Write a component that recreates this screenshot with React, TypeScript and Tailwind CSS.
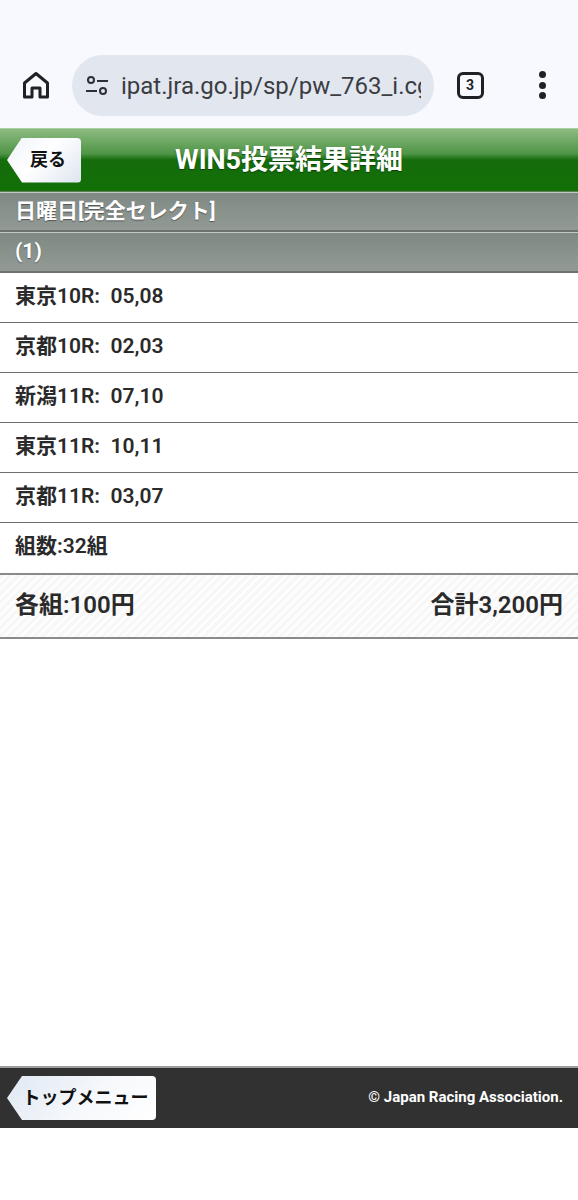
const FONT = "font-['Roboto','Noto_Sans_CJK_JP',sans-serif]";

function HomeIcon() {
  return (
    <svg width="28" height="28" viewBox="0 0 28 28" fill="none" stroke="#1f2125" strokeWidth="3" strokeLinejoin="round">
      <path d="M2.5 12 14 2.5 25.5 12v14H18v-9h-8v9H2.5z" />
    </svg>
  );
}

function TuneIcon() {
  return (
    <svg width="24" height="22" viewBox="0 0 24 22" fill="none" stroke="#2c2f33" strokeWidth="2">
      <circle cx="6" cy="5" r="3" />
      <path d="M12 6h11" />
      <path d="M1 16h11" />
      <circle cx="18" cy="16" r="3" />
    </svg>
  );
}

function Row({ children }: { children: React.ReactNode }) {
  return (
    <div className="h-[50px] flex items-center pl-[15px] pb-[2px] border-b border-[#6f6f6f] text-[21px] font-semibold text-[#2a2a2a] bg-white">
      {children}
    </div>
  );
}

function BackButton({ label, className }: { label: string; className: string }) {
  return (
    <div
      className={`flex items-center justify-center rounded-r-[4px] [clip-path:polygon(15px_0,100%_0,100%_100%,15px_100%,0_50%)] font-bold text-[#111] ${className}`}
    >
      {label}
    </div>
  );
}

function SubHeader({ h, children }: { h: string; children: React.ReactNode }) {
  return (
    <div className={`${h} flex items-center pl-[15px] text-[21px] font-bold text-white border-t border-[#c3cac5] border-b-2 border-b-[#6c736e] bg-[linear-gradient(#7f8984,#929a95)] [text-shadow:0_1px_1px_#555]`}>
      {children}
    </div>
  );
}

export default function App() {
  return (
    <div className={`${FONT} w-[578px] h-[1200px] bg-white flex flex-col`}>
      <div className="h-[128px] bg-[#f8f9ff] pt-[55px] pl-[7px] flex items-start">
        <div className="w-[58px] h-[60px] flex items-center justify-center">
          <HomeIcon />
        </div>
        <div className="ml-[7px] w-[362px] h-[61px] rounded-full bg-[#e2e6ef] flex items-center pl-[13px] pr-[12px] overflow-hidden">
          <TuneIcon />
          <div className="ml-[12px] w-[300px] overflow-hidden whitespace-nowrap text-[24px] text-[#3a3d42] font-['Roboto',sans-serif]">
            ipat.jra.go.jp/sp/pw_763_i.cgi
          </div>
        </div>
        <div className="ml-[22px] h-[60px] w-[28px] flex items-center justify-center">
          <div className="w-[27px] h-[27px] rounded-[6px] border-[3px] border-[#1f2125] flex items-center justify-center text-[14px] font-bold text-[#1f2125]">
            3
          </div>
        </div>
        <div className="ml-[55px] h-[60px] flex flex-col items-center justify-center gap-[3.5px]">
          <span className="w-[7px] h-[7px] rounded-full bg-[#1f2125]" />
          <span className="w-[7px] h-[7px] rounded-full bg-[#1f2125]" />
          <span className="w-[7px] h-[7px] rounded-full bg-[#1f2125]" />
        </div>
      </div>

      <div className="h-[64px] flex items-center border-t border-[#a9cfa2] bg-[linear-gradient(#8dbc82_0%,#4f9446_40%,#156c0c_50%,#127006_100%)] border-b border-b-[#5d7f58]">
        <div className="ml-[7px] h-[45px] w-[74px] rounded-[4px]">
          <BackButton
            label="戻る"
            className="w-full h-full pl-[8px] pb-[2px] text-[18px] bg-[linear-gradient(135deg,#eef3f9,#ffffff_45%,#dde5f0)]"
          />
        </div>
        <div className="ml-[94px] text-[27px] font-bold text-white leading-none [text-shadow:0_1px_1px_#0b4006]">
          WIN5投票結果詳細
        </div>
      </div>

      <SubHeader h="h-10">日曜日[完全セレクト]</SubHeader>
      <SubHeader h="h-[41px]">(1)</SubHeader>

      <Row>東京10R:&nbsp;&nbsp;05,08</Row>
      <Row>京都10R:&nbsp;&nbsp;02,03</Row>
      <Row>新潟11R:&nbsp;&nbsp;07,10</Row>
      <Row>東京11R:&nbsp;&nbsp;10,11</Row>
      <Row>京都11R:&nbsp;&nbsp;03,07</Row>
      <div className="h-[50px] flex items-center pl-[15px] pb-[2px] text-[21px] font-semibold text-[#2a2a2a] bg-white">
        組数:32組
      </div>

      <div className="h-[66px] flex items-center justify-between px-[15px] pb-[2px] border-t-2 border-b-2 border-[#8a8a8a] text-[24px] font-semibold text-[#2a2a2a] bg-[repeating-linear-gradient(135deg,#f7f7f7_0px,#f7f7f7_3px,#fdfdfd_3px,#fdfdfd_6px)]">
        <span>各組:100円</span>
        <span>合計3,200円</span>
      </div>

      <div className="flex-1" />

      <div className="h-[62px] mb-[72px] flex items-center justify-between bg-[#313131] border-t-2 border-[#9c9c9c] pl-[7px] pr-[15px]">
        <BackButton
          label="トップメニュー"
          className="w-[149px] h-[44px] pl-[8px] pb-[2px] text-[18px] bg-[linear-gradient(135deg,#dfe8f3,#f6f8fb_55%,#ffffff)]"
        />
        <span className="text-[15px] font-bold text-white pb-[1px]">© Japan Racing Association.</span>
      </div>
    </div>
  );
}
